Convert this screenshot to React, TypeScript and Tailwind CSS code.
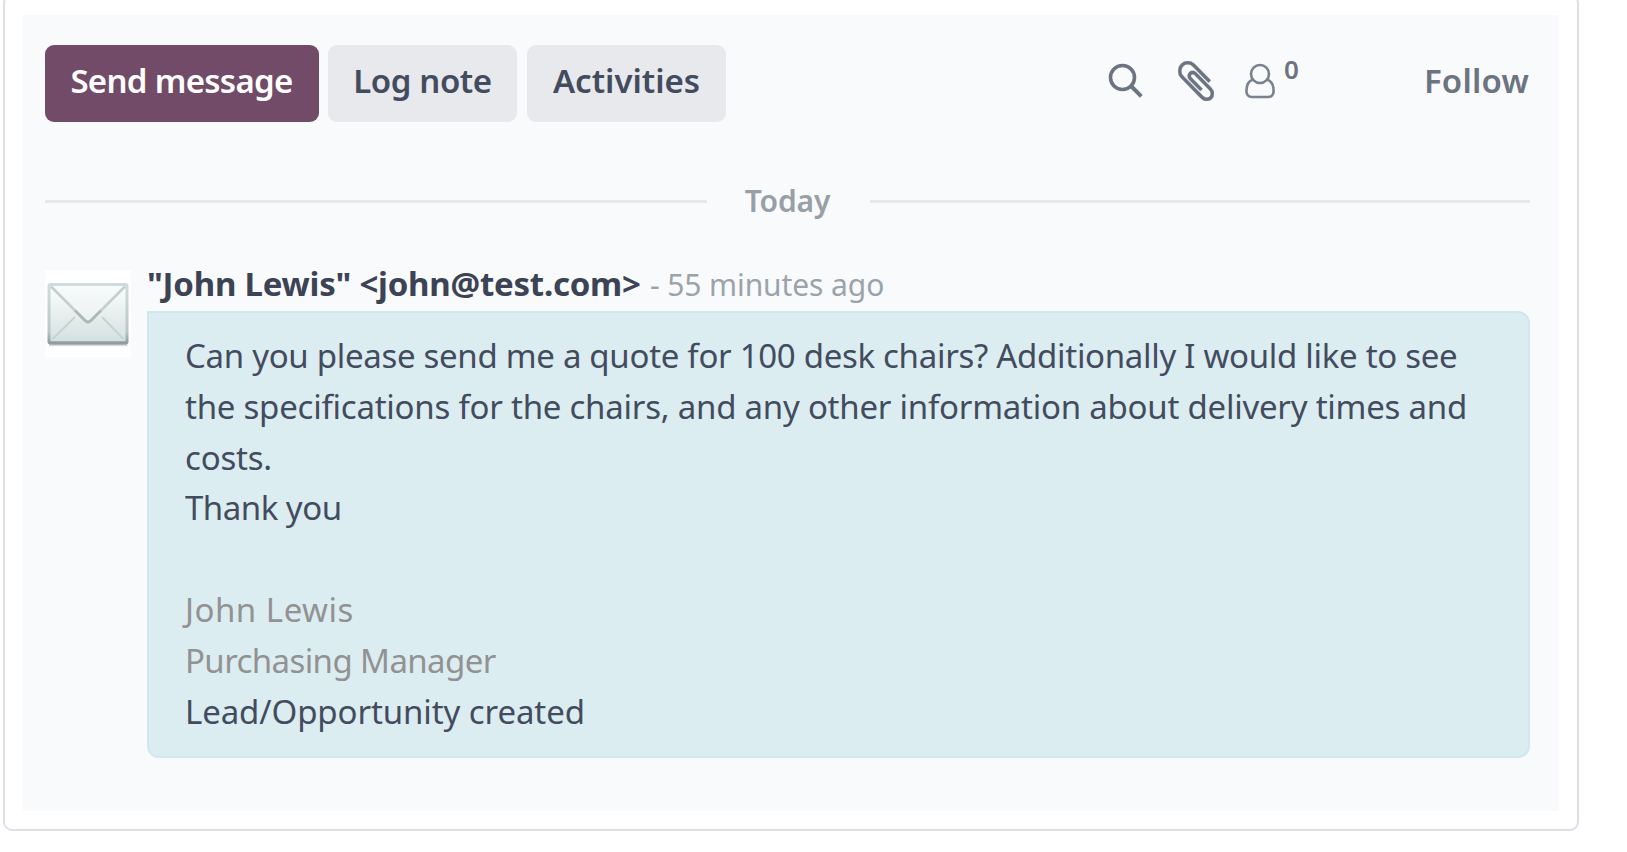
function SearchIcon() {
  return (
    <svg className="h-[36px] w-[36px] shrink-0" viewBox="0 0 36 36" fill="none" stroke="#6b7480" strokeWidth="3.600">
      <circle cx="14.5" cy="14.500" r="12" />
      <path d="M23 23 33.300 33.300" strokeWidth="4" />
    </svg>
  );
}

function PaperclipIcon() {
  return (
    <svg className="h-[40px] w-[36px] shrink-0" viewBox="4 132 1400 1528" preserveAspectRatio="none" fill="#6b7480" stroke="#6b7480" strokeWidth="14">
      <path d="M1404 1385q0 117-79 196t-196 79q-135 0-235-100l-777-776q-113-115-113-271 0-159 110-270t269-111q158 0 273 113l605 606q10 10 10 22 0 16-30.500 46.500t-46.500 30.500q-13 0-23-10l-606-607q-79-77-181-77-106 0-179 75t-73 181q0 105 76 181l776 777q63 63 145 63 64 0 106-42t42-106q0-82-63-145l-581-581q-26-24-60-24-29 0-48 19t-19 48q0 32 25 59l410 410q10 10 10 22 0 16-31 47t-47 31q-12 0-22-10l-410-410q-63-61-63-149 0-82 57-139t139-57q88 0 149 63l581 581q100 98 100 235z" />
    </svg>
  );
}

function UserIcon() {
  return (
    <svg className="h-[36px] w-[30px] shrink-0" viewBox="0 0 30 36" fill="none" stroke="#7a828d" strokeWidth="2.6">
      <circle cx="15" cy="11" r="9" />
      <path d="M8 16.500C3.500 18 1.400 22.500 1.400 28C1.400 31.500 3.500 34 7 34H23C26.500 34 28.600 31.500 28.600 28C28.600 22.500 26.500 18 22 16.500" />
    </svg>
  );
}

function Envelope() {
  return (
    <svg className="h-[87px] w-[86px]" viewBox="0 0 86 87">
      <defs>
        <linearGradient id="paper" x1="0" y1="0" x2="0" y2="1">
          <stop offset="0" stopColor="#fdfefe" />
          <stop offset="1" stopColor="#d3e0df" />
        </linearGradient>
        <linearGradient id="edge" x1="0" y1="0" x2="0" y2="1">
          <stop offset="0" stopColor="#cfdcdb" />
          <stop offset="0.8" stopColor="#bac7c8" />
          <stop offset="1" stopColor="#8f9b9e" />
        </linearGradient>
      </defs>
      <rect width="86" height="87" fill="#ffffff" />
      <path d="M4 75.500H83" stroke="#d9dddf" strokeWidth="1.500" />
      <rect x="4" y="14.500" width="78" height="58.500" rx="1.500" fill="url(#paper)" stroke="url(#edge)" strokeWidth="3" />
      <path d="M4 73H82" stroke="#929da0" strokeWidth="3" />
      <path d="M7.500 69 30 47M78.500 69 57 47" stroke="#c6d2d2" strokeWidth="1.800" />
      <path d="M6 16.500 40 50.500Q43 53.500 46 50.500L80 16.500" fill="#f4f8f8" fillOpacity="0.5" stroke="#c3d0cf" strokeWidth="2.600" />
      <path d="M30 40.500 40 50.500Q43 53.500 46 50.500L56 40.500" fill="none" stroke="#adb9b9" strokeWidth="2.600" />
    </svg>
  );
}

export default function App() {
  return (
    <div className="h-[852px] overflow-hidden bg-white pl-[3px] font-['Noto_Sans',sans-serif] text-[33px] whitespace-nowrap text-[#434c5e]">
      <div className="-mt-[6px] h-[837px] w-[1576px] rounded-[9px] border-2 border-[#dce0e5] pt-[19px] pl-[18px]">
        <div className="h-[796px] w-[1536px] bg-[#f9fafc] pt-[30px] pr-[30px] pl-[22px]">
          <div className="flex h-[77px] items-center font-semibold text-[#434c5e]">
            <button className="flex h-[77px] w-[274px] items-center justify-center rounded-[9px] bg-[#714b67] pr-[1px] pb-[5px] tracking-[-0.700px] text-white">
              Send message
            </button>
            <button className="ml-[9px] flex h-[77px] w-[189px] items-center justify-center rounded-[9px] bg-[#e7e9ed] pb-[5px] tracking-[-0.400px]">
              Log note
            </button>
            <button className="ml-[10px] flex h-[77px] w-[199px] items-center justify-center rounded-[9px] bg-[#e7e9ed] pb-[5px]">
              Activities
            </button>
            <div className="ml-auto flex items-center pb-[5px] text-[#6b7480]">
              <SearchIcon />
              <span className="ml-[34px] flex">
                <PaperclipIcon />
              </span>
              <span className="ml-[31px] flex">
                <UserIcon />
              </span>
              <span className="ml-[9px] -mt-[24px] w-[16px] text-[26px] leading-none">0</span>
              <span className="ml-[124px] tracking-[0.200px]">Follow</span>
            </div>
          </div>
          <div className="-mr-[1px] mt-[57px] flex h-[44px] items-center text-[30px] font-semibold text-[#989fa7]">
            <div className="h-[3px] w-[662px] bg-[#e6e8eb]" />
            <span className="w-[163px] pr-[2px] pb-[1px] text-center tracking-[-0.100px]">Today</span>
            <div className="h-[3px] flex-1 bg-[#e6e8eb]" />
          </div>
          <div className="-mr-[1px] mt-[37px] flex">
            <div className="mt-[10px] h-[87px] w-[102px] shrink-0">
              <Envelope />
            </div>
            <div className="flex-1">
              <div className="flex h-[51px] items-baseline pt-[1px] leading-[45px]">
                <span className="w-[503px] font-bold tracking-[-0.230px] text-[#3b4355]">
                  &quot;John Lewis&quot; &lt;john@test.com&gt;
                </span>
                <span className="text-[30px] tracking-[-0.100px] text-[#9ba3aa]">- 55 minutes ago</span>
              </div>
              <div className="h-[447px] rounded-xl rounded-tl-none border-2 border-[#d0e8ed] bg-[#dcedf1] pt-[18px] pl-[36px] leading-[50.800px]">
                <div className="tracking-[-0.300px]">
                  Can you please send me a quote for 100 desk chairs? Additionally I would like to see
                </div>
                <div className="tracking-[-0.240px]">
                  the specifications for the chairs, and any other information about delivery times and
                </div>
                <div className="tracking-[-0.200px]">costs.</div>
                <div className="tracking-[-0.500px]">Thank you</div>
                <br />
                <div className="tracking-[0.500px] text-[#929292]">John Lewis</div>
                <div className="tracking-[-0.600px] text-[#929292]">Purchasing Manager</div>
                <div className="tracking-[-0.100px]">Lead/Opportunity created</div>
              </div>
            </div>
          </div>
        </div>
      </div>
    </div>
  );
}
